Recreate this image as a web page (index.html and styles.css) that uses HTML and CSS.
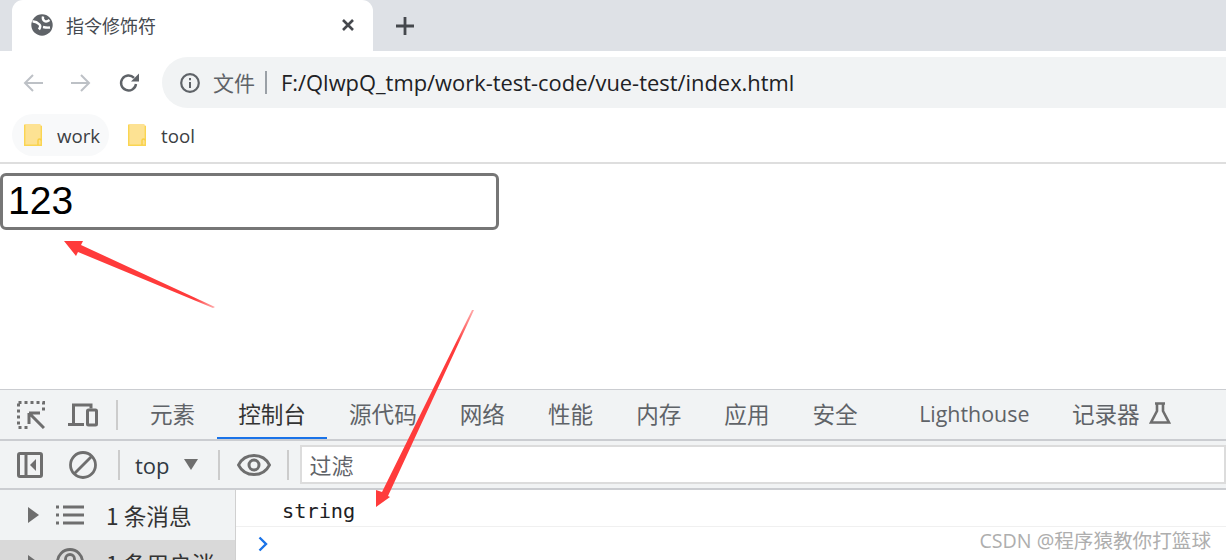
FILE: index.html
```html
<!DOCTYPE html>
<html lang="zh-CN">
<head>
<meta charset="utf-8">
<title>指令修饰符</title>
<link rel="stylesheet" href="styles.css">
</head>
<body>
<div class="screen">
  <header class="tabstrip">
    <div class="tab">
      <svg class="tab-globe" viewBox="0 0 22 22"><circle cx="11" cy="11" r="10.700" fill="#5f6368"/><path d="M1.500 7.500C5 7 7 9 8.500 10.500S9 14 8 15.500M12 2.500c-.5 2 0 3.500 1.500 4.500s3 .5 5-1M12 13c2 .5 4 1 7 .5" stroke="#fff" stroke-width="2.400" fill="none"/></svg>
      <span class="tab-title">指令修饰符</span>
      <svg class="tab-close" viewBox="0 0 14 14"><path d="M2 2l10 10M12 2L2 12" stroke="#45484d" stroke-width="2.600" fill="none"/></svg>
    </div>
    <svg class="new-tab" viewBox="0 0 18 18"><path d="M9 0v18M0 9h18" stroke="#45484d" stroke-width="2.800" fill="none"/></svg>
  </header>

  <div class="toolbar">
    <svg class="nav-icon" viewBox="0 0 20 20"><path d="M20 10H2M10 2l-8 8 8 8" stroke="#bdc1c6" stroke-width="2" fill="none"/></svg>
    <svg class="nav-icon" viewBox="0 0 20 20"><path d="M0 10h18M10 2l8 8-8 8" stroke="#bdc1c6" stroke-width="2" fill="none"/></svg>
    <svg class="nav-icon" viewBox="0 0 20 20"><path d="M17 11a7.500 7.500 0 1 1-2-6.200" stroke="#5f6368" stroke-width="2.400" fill="none"/><path d="M20 .5v8h-8z" fill="#5f6368"/></svg>
    <div class="omnibox">
      <svg class="info-icon" viewBox="0 0 20 20"><circle cx="10" cy="10" r="8.800" stroke="#5f6368" stroke-width="2.200" fill="none"/><path d="M10 9v6M10 5v2.200" stroke="#5f6368" stroke-width="2" fill="none"/></svg>
      <span class="omni-scheme">文件</span>
      <span class="omni-bar"></span>
      <span class="omni-url">F:/QlwpQ_tmp/work-test-code/vue-test/index.html</span>
    </div>
  </div>

  <nav class="bookmarks">
    <div class="bookmark bookmark-hover">
      <svg class="folder" viewBox="0 0 18 22"><path d="M1 0h15l2 2v19a1 1 0 0 1-1 1H1a1 1 0 0 1-1-1V1a1 1 0 0 1 1-1z" fill="#fde293"/><path d="M.7 1v20.300h16.600V2" stroke="#fad552" stroke-width="1.400" fill="none"/><path d="M14 21v-4.500a1 1 0 0 1 3 0" stroke="#f8cf45" stroke-width="1.400" fill="none"/></svg>
      <span>work</span>
    </div>
    <div class="bookmark">
      <svg class="folder" viewBox="0 0 18 22"><path d="M1 0h15l2 2v19a1 1 0 0 1-1 1H1a1 1 0 0 1-1-1V1a1 1 0 0 1 1-1z" fill="#fde293"/><path d="M.7 1v20.300h16.600V2" stroke="#fad552" stroke-width="1.400" fill="none"/><path d="M14 21v-4.500a1 1 0 0 1 3 0" stroke="#f8cf45" stroke-width="1.400" fill="none"/></svg>
      <span>tool</span>
    </div>
  </nav>

  <main class="page">
    <input class="page-input" type="text" value="123" aria-label="value">
  </main>

  <section class="devtools">
    <div class="dt-tabs">
      <svg class="dt-icon" viewBox="0 0 28 28"><path d="M1.500 1.500h25v25h-25z" stroke="#6e6e6e" stroke-width="3" stroke-dasharray="3 3" fill="none"/><rect x="12" y="12" width="17" height="17" fill="#f1f3f4"/><path d="M12 12h11M12 12v11M12 12l15 15" stroke="#6e6e6e" stroke-width="3" fill="none"/></svg>
      <svg class="dt-icon dt-device" viewBox="0 0 30 24"><path d="M5.500 20V2H23v3.500M0 21.500h16" stroke="#6e6e6e" stroke-width="3" fill="none"/><rect x="19.500" y="7" width="9" height="15" rx="1" stroke="#6e6e6e" stroke-width="3" fill="none"/></svg>
      <span class="dt-sep"></span>
      <span class="dt-tab">元素</span>
      <span class="dt-tab dt-tab-active">控制台</span>
      <span class="dt-tab">源代码</span>
      <span class="dt-tab">网络</span>
      <span class="dt-tab">性能</span>
      <span class="dt-tab">内存</span>
      <span class="dt-tab">应用</span>
      <span class="dt-tab">安全</span>
      <span class="dt-tab dt-tab-gap">Lighthouse</span>
      <span class="dt-tab dt-tab-last">记录器</span>
      <svg class="flask" viewBox="0 0 22 22"><path d="M6 1.500h10M8 1.500V9L2 20.500h18L14 9V1.500" stroke="#6e6e6e" stroke-width="2.600" fill="none"/></svg>
    </div>

    <div class="dt-console-bar">
      <svg class="bar-sidebar" viewBox="0 0 26 26"><rect x="1.500" y="1.500" width="23" height="23" rx="1.500" stroke="#6e6e6e" stroke-width="3" fill="none"/><path d="M9 1v24" stroke="#6e6e6e" stroke-width="3"/><path d="M19 7v12l-6-6z" fill="#6e6e6e"/></svg>
      <svg class="bar-clear" viewBox="0 0 28 28"><circle cx="14" cy="14" r="12.500" stroke="#6e6e6e" stroke-width="2.800" fill="none"/><path d="M23 5L5 23" stroke="#6e6e6e" stroke-width="2.800"/></svg>
      <span class="dt-sep"></span>
      <span class="bar-top">top</span>
      <span class="bar-caret"></span>
      <span class="dt-sep"></span>
      <svg class="bar-eye" viewBox="0 0 34 22"><path d="M1.500 11C5 4 11 1.500 17 1.500S29 4 32.500 11C29 18 23 20.500 17 20.500S5 18 1.500 11z" stroke="#6e6e6e" stroke-width="2.800" fill="none"/><circle cx="17" cy="11" r="5" stroke="#6e6e6e" stroke-width="3" fill="none"/></svg>
      <span class="dt-sep"></span>
      <div class="bar-filter">过滤</div>
    </div>

    <div class="dt-body">
      <aside class="dt-side">
        <div class="side-row">
          <span class="side-tri"></span>
          <svg class="side-icon" viewBox="0 0 28 20"><path d="M7 2h21M7 10h21M7 18h21" stroke="#6e6e6e" stroke-width="3"/><path d="M0 2h3M0 10h3M0 18h3" stroke="#6e6e6e" stroke-width="3"/></svg>
          <span class="side-label">1 条消息</span>
        </div>
        <div class="side-row side-row-selected">
          <span class="side-tri"></span>
          <svg class="side-icon" viewBox="0 0 28 28"><circle cx="14" cy="14" r="12.500" stroke="#6e6e6e" stroke-width="2.800" fill="none"/><circle cx="14" cy="11" r="4.500" stroke="#6e6e6e" stroke-width="2.800" fill="none"/></svg>
          <span>1 条用户消</span>
        </div>
      </aside>
      <div class="dt-log">
        <div class="log-row">string</div>
        <svg class="log-prompt" viewBox="0 0 10 16"><path d="M1.500 1.500L8 8l-6.500 6.500" stroke="#1a73e8" stroke-width="2.400" fill="none"/></svg>
      </div>
    </div>
  </section>

  <svg class="arrows" viewBox="0 0 1226 560">
    <defs>
      <linearGradient id="fade1" gradientUnits="userSpaceOnUse" x1="214" y1="307" x2="195" y2="298"><stop offset="0" stop-color="#ff3b3b" stop-opacity=".45"/><stop offset="1" stop-color="#ff3b3b"/></linearGradient>
      <linearGradient id="fade2" gradientUnits="userSpaceOnUse" x1="473" y1="311" x2="458" y2="345"><stop offset="0" stop-color="#ff3b3b" stop-opacity=".45"/><stop offset="1" stop-color="#ff3b3b"/></linearGradient>
    </defs>
    <polygon points="64,241 83,241 81,245 215,307 213,308 78,252 76,256" fill="url(#fade1)"/>
    <polygon points="474,310 472,310 382,492 376,490 376,507 390,497 388,496" fill="url(#fade2)"/>
  </svg>

  <div class="watermark">CSDN @程序猿教你打篮球</div>
</div>
</body>
</html>
```
FILE: styles.css
```css
* { box-sizing: border-box; }
html, body { margin: 0; padding: 0; background: #fff; }
body { font-family: "Open Sans", "Noto Sans CJK SC", sans-serif; }
svg { display: block; flex: none; }

.screen { position: relative; width: 1226px; height: 560px; overflow: hidden; display: flex; flex-direction: column; }

.tabstrip { height: 51px; flex: none; background: #dee1e6; display: flex; align-items: flex-end; padding-left: 12px; }
.tab { width: 361px; height: 51px; background: #fff; border-radius: 11px 11px 0 0; display: flex; align-items: center; padding: 0 18px 2px 19px; }
.tab-globe { width: 22px; height: 22px; margin-right: 13px; }
.tab-title { flex: 1; font: 18px/26px "Noto Sans CJK SC", sans-serif; color: #45494f; }
.tab-close { width: 14px; height: 14px; }
.new-tab { width: 18px; height: 18px; margin: 0 0 16px 23px; }

.toolbar { height: 63px; flex: none; display: flex; align-items: center; padding: 0 0 0 23px; gap: 28px; }
.nav-icon { width: 20px; height: 20px; margin-top: 0; }
.omnibox { flex: 1; height: 51px; margin: 0 0 0 -5px; background: #f1f3f4; border-radius: 26px 0 0 26px; display: flex; align-items: center; padding-left: 18px; }
.info-icon { width: 20px; height: 20px; margin-right: 13px; }
.omni-scheme { font: 21px/30px "Noto Sans CJK SC", sans-serif; color: #5f6368; margin-top: -2px; }
.omni-bar { width: 2px; height: 23px; background: #9aa0a6; margin: 0 14px 0 10px; }
.omni-url { font: 21.900px/30px "Open Sans", sans-serif; color: #202124; white-space: nowrap; }

.bookmarks { height: 50px; flex: none; display: flex; padding: 0 0 0 12px; border-bottom: 2px solid #dedede; font: 18.700px/26px "Open Sans", sans-serif; color: #3c4043; }
.bookmarks span { margin-top: 2px; }
.bookmark { height: 42px; display: flex; align-items: center; padding: 0 9px 0 12px; gap: 15px; border-radius: 21px; }
.bookmark-hover { background: #f8f9fa; margin-right: 7px; width: 97px; }
.folder { width: 18px; height: 22px; }

.page { height: 225px; flex: none; padding-top: 9px; }
.page-input { display: block; width: 499px; height: 57px; margin: 0; padding: 0 5px 2px; border: 3px solid #767676; border-radius: 6px; background: #fff; font: 39px "Liberation Sans", Arial, sans-serif; color: #000; outline: none; }

.devtools { flex: 1; min-height: 0; display: flex; flex-direction: column; border-top: 1px solid #cbcdd1; }
.dt-sep { width: 2px; height: 30px; background: #ccc; flex: none; }

.dt-tabs { height: 51px; flex: none; display: flex; align-items: center; background: #f1f3f4; border-bottom: 2px solid #cbcdd1; padding-left: 17px; color: #5f6368; font: 22.600px/30px "Noto Sans CJK SC", sans-serif; }
.dt-icon { width: 28px; height: 28px; }
.dt-device { width: 30px; height: 24px; margin: 0 0 0 23px; }
.dt-tabs .dt-sep { margin: 0 10.500px 0 18px; }
.dt-tab { height: 49px; line-height: 47px; padding: 0 21.500px; white-space: nowrap; }
.dt-tab-active { color: #333; border-bottom: 2px solid #1a73e8; }
.dt-tab-gap { margin-left: 19px; font-family: "Open Sans", sans-serif; font-size: 21.400px; padding: 0 21px; }
.dt-tab-last { padding-right: 9px; }
.flask { width: 22px; height: 22px; margin-top: -3px; }

.dt-console-bar { height: 49px; flex: none; display: flex; align-items: center; background: #f1f3f4; border-bottom: 2px solid #cbcdd1; padding-left: 17px; }
.bar-sidebar { width: 26px; height: 26px; }
.bar-clear { width: 28px; height: 28px; margin: 0 21px 0 26px; }
.bar-top { font: 22px/30px "Open Sans", sans-serif; color: #303942; margin-left: 15px; }
.bar-caret { width: 0; height: 0; border-left: 7.500px solid transparent; border-right: 7.500px solid transparent; border-top: 11px solid #6e6e6e; margin: -1px 20px 0 14px; }
.bar-eye { width: 34px; height: 22px; margin: 0 16px 0 17px; }
.bar-filter { flex: 1; height: 39px; margin-left: 11px; padding-left: 8px; border: 2px solid #dcdcdc; background: #fff; font: 22px/35px "Noto Sans CJK SC", sans-serif; color: #5f6368; }

.dt-body { flex: 1; min-height: 0; display: flex; }
.dt-side { width: 235px; flex: none; background: #f1f3f4; font: 22.700px/30px "Noto Sans CJK SC", sans-serif; color: #333; }
.side-row { height: 50px; display: flex; align-items: center; padding-left: 28px; white-space: nowrap; overflow: hidden; }
.side-label { margin-top: 2px; }
.side-row-selected { background: #d9d9d9; align-items: flex-start; padding-top: 9px; }
.side-tri { width: 0; height: 0; border-top: 8px solid transparent; border-bottom: 8px solid transparent; border-left: 11px solid #6e6e6e; flex: none; }
.side-row-selected .side-tri { margin-top: 6px; }
.side-icon { width: 28px; height: 20px; margin: 0 22px 0 17px; }
.side-row-selected .side-icon { height: 28px; margin-top: -1px; }
.dt-log { flex: 1; min-width: 0; border-left: 1px solid #d0d0d0; background: #fff; }
.log-row { height: 37px; padding-left: 46px; border-bottom: 1px solid #f0f0f0; font: 20.300px/43px "DejaVu Sans Mono", monospace; color: #202124; }
.log-prompt { width: 10px; height: 16px; margin: 9px 0 0 22px; }

.arrows { position: absolute; left: 0; top: 0; width: 1226px; height: 560px; pointer-events: none; }
.watermark { position: absolute; right: 15px; top: 527px; font: 19.600px/28px "Open Sans", "Noto Sans CJK SC", sans-serif; color: #aeaeae; white-space: nowrap; }
```
